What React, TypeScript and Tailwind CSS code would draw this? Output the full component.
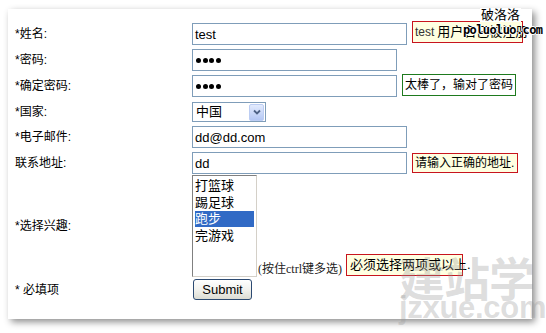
import React from "react";

const inputCls =
  "h-[22px] border border-[#7f9db9] bg-white flex items-center pl-[2px] text-[13px] text-black font-['Liberation_Sans','Noto_Sans_CJK_SC',sans-serif] leading-none";

function Label({ children }: { children: React.ReactNode }) {
  return (
    <div className="w-[184px] shrink-0 pl-[7px] text-[12px] leading-[14px] text-black font-['Liberation_Sans','Noto_Sans_CJK_SC',sans-serif] whitespace-nowrap">
      {children}
    </div>
  );
}

function Dots() {
  return (
    <div className="flex gap-[1.5px] pl-[1px]">
      {[0, 1, 2, 3].map((i) => (
        <span key={i} className="block w-[5px] h-[5px] rounded-full bg-black" />
      ))}
    </div>
  );
}

export default function App() {
  return (
    <div className="w-[546px] h-[333px] bg-white pl-[8px] pt-[9px] relative overflow-hidden font-['Liberation_Sans','Noto_Sans_CJK_SC',sans-serif]">
      <div className="w-[524px] h-[310px] bg-white shadow-[3px_3px_7px_rgba(0,0,0,0.45)] pt-[14px] flex flex-col">
        {/* row 1 */}
        <div className="flex items-center h-[22px]">
          <Label>*姓名:</Label>
          <div className={inputCls + " w-[215px]"}>test</div>
          <div className="ml-[5px] -mt-[4px] h-[22px] w-[111px] border border-[#c8141e] bg-[#ffffe1] flex items-center pl-[2px] whitespace-nowrap text-black">
            <span className="text-[12px] text-[#333]">test</span>
            <span className="text-[13px] ml-[3px]">用户名已被注册</span>
          </div>
        </div>
        {/* row 2 */}
        <div className="flex items-center h-[22px] mt-[4px]">
          <Label>*密码:</Label>
          <div className={inputCls + " w-[205px]"}>
            <Dots />
          </div>
        </div>
        {/* row 3 */}
        <div className="flex items-center h-[22px] mt-[4px]">
          <Label>*确定密码:</Label>
          <div className={inputCls + " w-[205px]"}>
            <Dots />
          </div>
          <div className="ml-[5px] -mt-[2px] h-[22px] w-[114px] border border-[#1e7a1e] bg-white flex items-center pl-[2px] whitespace-nowrap text-[12px] text-black">
            太棒了，输对了密码
          </div>
        </div>
        {/* row 4 */}
        <div className="flex items-center h-[22px] mt-[4px]">
          <Label>*国家:</Label>
          <div className="h-[20px] w-[74px] border border-[#7f9db9] bg-white flex items-center justify-between pl-[3px] pr-[1px] text-[13px] text-black">
            <span>中国</span>
            <span className="w-[15px] h-[17px] rounded-[2px] border border-[#bccdf3] bg-gradient-to-b from-[#e3ebfd] to-[#b4c7f4] flex items-center justify-center">
              <svg width="8" height="6" viewBox="0 0 8 6">
                <path d="M1 1.5 L4 4.5 L7 1.5" stroke="#4d6185" strokeWidth="1.8" fill="none" />
              </svg>
            </span>
          </div>
        </div>
        {/* row 5 */}
        <div className="flex items-center h-[22px] mt-[3px]">
          <Label>*电子邮件:</Label>
          <div className={inputCls + " w-[215px]"}>dd@dd.com</div>
        </div>
        {/* row 6 */}
        <div className="flex items-center h-[22px] mt-[4px]">
          <Label>联系地址:</Label>
          <div className={inputCls + " w-[215px]"}>dd</div>
          <div className="ml-[5px] h-[20px] w-[106px] border border-[#c8141e] bg-[#ffffe1] flex items-center pl-[2px] whitespace-nowrap text-[12px] text-black">
            请输入正确的地址.
          </div>
        </div>
        {/* row 7 */}
        <div className="flex items-center h-[102px] mt-[1px]">
          <Label>*选择兴趣:</Label>
          <div className="flex items-end h-full">
            <div className="h-[102px] w-[65px] border-l border-t border-[#808080] border-r border-b border-r-[#d4d0c8] border-b-[#d4d0c8] bg-white pt-[1px] px-[2px] text-[13px] text-black">
              <div className="h-[17px] leading-[17px]">打篮球</div>
              <div className="h-[17px] leading-[17px]">踢足球</div>
              <div className="h-[16px] leading-[16px] bg-[#316ac5] text-white">跑步</div>
              <div className="h-[17px] leading-[18px]">完游戏</div>
            </div>
            <div className="ml-[1px] mb-[1px] text-[12px] leading-[14px] text-[#222] font-['Liberation_Serif','Noto_Sans_CJK_SC',serif] whitespace-nowrap">
              (按住ctrl键多选)
            </div>
            <div className="ml-[4px] mb-[1px] h-[22px] w-[117px] border border-[#c8141e] bg-[#ffffe1] flex items-center pl-[3px] whitespace-nowrap text-[13px] text-black">
              必须选择两项或以上.
            </div>
          </div>
        </div>
        {/* row 8 */}
        <div className="flex items-center h-[21px] mt-[2px]">
          <Label>* 必填项</Label>
          <div className="ml-[1px] h-[21px] w-[59px] rounded-[3px] border border-[#2c4a72] bg-gradient-to-b from-[#ffffff] via-[#f2f2ee] to-[#dcdcd3] flex items-center justify-center text-[13px] text-black">
            Submit
          </div>
        </div>
      </div>

      {/* watermark: 破洛洛 */}
      <div className="absolute left-[480px] top-[8px] bg-white px-[1px] text-[13px] leading-[14px] text-black whitespace-nowrap">
        破洛洛
      </div>
      <div className="absolute left-[463px] top-[24px] text-[12px] leading-[12px] font-bold text-black font-['DejaVu_Sans_Mono',monospace] tracking-[-0.6px] [text-shadow:1px_0_0_#fff,-1px_0_0_#fff,0_1px_0_#fff,0_-1px_0_#fff] whitespace-nowrap">
        poluoluo.com
      </div>

      {/* watermark: 建站学 jzxue.com */}
      <div className="absolute left-[399px] top-[251px] flex flex-col items-start pointer-events-none text-[rgba(150,150,150,0.33)]">
        <div className="text-[46px] leading-[50px] font-bold tracking-[-1px] font-['Noto_Sans_CJK_SC',sans-serif]">
          建站学
        </div>
        <div className="text-[31px] leading-[31px] font-bold tracking-[-0.3px] font-['Liberation_Sans',sans-serif] -mt-[9px]">
          jzxue.com
        </div>
      </div>
    </div>
  );
}
